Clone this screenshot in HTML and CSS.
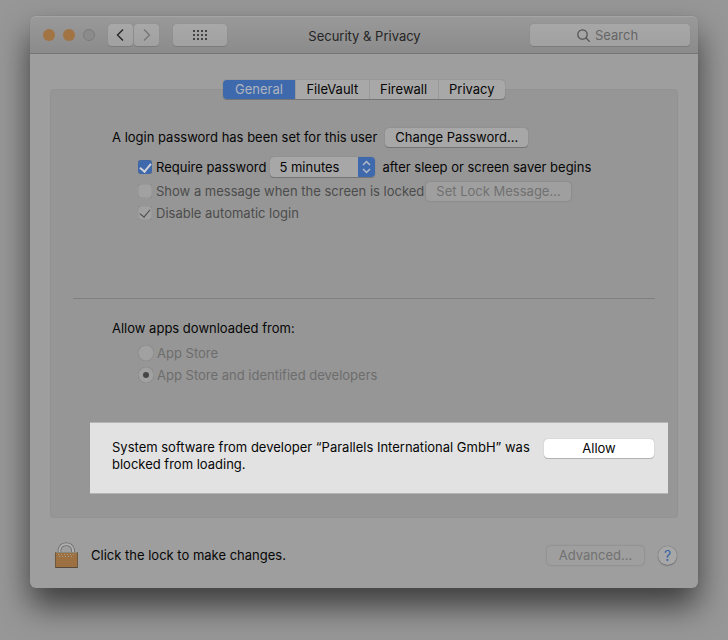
FILE: index.html
```html
<!DOCTYPE html>
<html lang="en">
<head>
<meta charset="utf-8">
<meta name="viewport" content="width=device-width, initial-scale=1">
<title>Security &amp; Privacy</title>
<link rel="stylesheet" href="styles.css">
</head>
<body>
<main class="window">
  <header class="titlebar">
    <div class="lights">
      <button class="light" aria-label="Close"></button>
      <button class="light" aria-label="Minimize"></button>
      <button class="light light-off" aria-label="Zoom" disabled></button>
    </div>
    <div class="history">
      <button class="tool" aria-label="Back"><svg width="10" height="14" viewBox="0 0 10 14"><path d="M7 1.500 1.500 7 7 12.500" fill="none" stroke="#26262a" stroke-width="1.400"/></svg></button>
      <button class="tool" aria-label="Forward"><svg width="10" height="14" viewBox="0 0 10 14"><path d="M2 1.500 7.500 7 2 12.500" fill="none" stroke="#757575" stroke-width="1.300"/></svg></button>
    </div>
    <button class="tool tool-grid" aria-label="Show All"><svg width="14" height="10" viewBox="0 0 14 10" fill="#444"><path d="M0 0h2v2H0zM4 0h2v2H4zM8 0h2v2H8zM12 0h2v2h-2zM0 4h2v2H0zM4 4h2v2H4zM8 4h2v2H8zM12 4h2v2h-2zM0 8h2v2H0zM4 8h2v2H4zM8 8h2v2H8zM12 8h2v2h-2z"/></svg></button>
    <h1 class="title">Security &amp; Privacy</h1>
    <label class="search">
      <svg width="13" height="13" viewBox="0 0 13 13" fill="none" stroke="#505050" stroke-width="1.200"><circle cx="5.500" cy="5.500" r="4.700"/><path d="m9 9 3.700 3.700"/></svg>
      <input class="search-input" type="text" placeholder="Search" aria-label="Search">
    </label>
  </header>

  <div class="content">
    <nav class="tabs">
      <button class="tab tab-active">General</button>
      <button class="tab">FileVault</button>
      <button class="tab">Firewall</button>
      <button class="tab">Privacy</button>
    </nav>

    <section class="panel">
      <div class="row login">
        <span>A login password has been set for this user</span>
        <button class="button">Change Password…</button>
      </div>
      <div class="row option require">
        <input class="check" type="checkbox" id="require" checked>
        <label class="option-label" for="require">Require password</label>
        <span class="picker">
          <select class="select" aria-label="Delay"><option>5 minutes</option></select>
          <svg class="stepper" width="17" height="20" viewBox="0 0 17 20" fill="none" stroke="#b4bac4" stroke-width="1.500"><path d="m5 8 3.500-3.500L12 8M5 12l3.500 3.500L12 12"/></svg>
        </span>
        <label for="require">after sleep or screen saver begins</label>
      </div>
      <div class="row option message">
        <input class="check" type="checkbox" id="message" disabled>
        <label class="option-label dim" for="message">Show a message when the screen is locked</label>
        <button class="button button-off" disabled>Set Lock Message…</button>
      </div>
      <div class="row option autologin">
        <input class="check" type="checkbox" id="autologin" checked disabled>
        <label class="option-label dim" for="autologin">Disable automatic login</label>
      </div>

      <hr class="divider">

      <div class="row source">Allow apps downloaded from:</div>
      <div class="row option store">
        <input class="radio" type="radio" name="source" id="store" disabled>
        <label class="option-label faint" for="store">App Store</label>
      </div>
      <div class="row option developers">
        <input class="radio" type="radio" name="source" id="developers" checked disabled>
        <label class="option-label faint" for="developers">App Store and identified developers</label>
      </div>

      <div class="notice">
        <p class="notice-text">System software from developer “Parallels International GmbH” was blocked from loading.</p>
        <button class="button button-allow">Allow</button>
      </div>
    </section>

    <footer class="footer">
      <button class="lock" aria-label="Unlock"><svg width="23" height="28" viewBox="0 0 23 28"><path d="M4.500 12V8.500a7 7 0 0 1 13.500 0V12" fill="none" stroke="#686868" stroke-width="3.500"/><path d="M4.500 12V8.500a7 7 0 0 1 13.500 0V12" fill="none" stroke="#b0b0b0" stroke-width="2"/><path d="M.5 11.500h22v15H.5z" fill="#9c7041" stroke="#6d573e"/><path d="M1 11.500h21" stroke="#8c877c"/><path d="M3 13.500h18M4 15.500h15" stroke="#aa9f8d" stroke-dasharray="1 2"/><path d="M.5 26.500h22" stroke="#57493a"/></svg></button>
      <span class="footer-text">Click the lock to make changes.</span>
      <button class="button button-off button-advanced" disabled>Advanced…</button>
      <button class="help" aria-label="Help">?</button>
    </footer>
  </div>
</main>
</body>
</html>
```
FILE: styles.css
```css
* {
  box-sizing: border-box;
}

body {
  margin: 0;
  padding: 16px 30px 53px;
  background: #979797;
  color: #060606;
  font: 13px/17px Inter, "Liberation Sans", sans-serif;
}

button,
input,
select {
  margin: 0;
  padding: 0;
  border: 0;
  color: inherit;
  font: inherit;
}

.window {
  border-radius: 6px;
  background: #9e9e9e;
  box-shadow: 0 0 1px #666, 0 18px 32px rgba(0, 0, 0, 0.6);
}

.titlebar {
  display: flex;
  align-items: center;
  height: 38px;
  padding: 0 8px 0 13px;
  border-top: 1px solid #a5a5a5;
  border-bottom: 1px solid #757575;
  border-radius: 6px 6px 0 0;
  background: linear-gradient(#999, #8b8b8b);
}

.lights {
  display: flex;
  gap: 8px;
}

.light {
  width: 12px;
  height: 12px;
  border-radius: 50%;
  background: #a27443;
}

.light-off {
  border: 1px solid #7b7b7b;
  background: #8b8b8b;
}

.history {
  display: flex;
  gap: 1px;
  margin: 0 14px 0 13px;
}

.tool {
  display: grid;
  place-items: center;
  width: 25px;
  height: 22px;
  border-radius: 4px;
  background: linear-gradient(#a8a8a8, #a1a1a1);
  box-shadow: 0 0 1px #777, 0 1px 0 #7c7c7c;
}

.tool-grid {
  width: 54px;
}

.title {
  flex: 1;
  margin: 0;
  padding: 2px 28px 0 0;
  color: #252525;
  font-size: 13px;
  font-weight: 400;
  text-align: center;
}

.search {
  display: flex;
  align-items: center;
  justify-content: center;
  gap: 5px;
  width: 160px;
  height: 22px;
  padding-right: 14px;
  padding-left: 10px;
  border-radius: 4px;
  background: linear-gradient(#a7a7a7, #a1a1a1);
  box-shadow: 0 0 1px #777, 0 1px 0 #7c7c7c;
}

.search-input {
  width: 44px;
  background: none;
}

.search-input::placeholder {
  color: #666;
  opacity: 1;
}

.content {
  padding: 26px 20px 19px;
}

.tabs {
  position: relative;
  display: flex;
  width: 282px;
  margin: 0 auto;
  border-radius: 4px;
  background: #a8a8a8;
  box-shadow: 0 0 1px #666, 0 1px 0 #777;
}

.tab {
  flex: 1 1 auto;
  height: 19px;
  border-left: 1px solid #999;
  background: none;
}

.tab-active {
  flex: none;
  width: 72px;
  border: 0;
  border-radius: 4px 0 0 4px;
  background: #3e69ad;
  color: #b0b5be;
}

.panel {
  margin-top: -10px;
  padding: 37px 9px 23px 39px;
  border: 1px solid #929292;
  border-radius: 4px;
  background: #969696;
}

.row {
  display: flex;
  align-items: center;
  height: 20px;
  margin: 0 0 2px 22px;
  white-space: nowrap;
}

.login {
  gap: 8px;
  margin-bottom: 10px;
}

.option {
  margin-left: 48px;
}

.option-label {
  margin-left: 4px;
}

.require {
  margin-bottom: 4px;
}

.dim {
  color: #4c4c4c;
}

.faint {
  margin-left: 3px;
  color: #6d6d6d;
}

.check,
.radio {
  display: grid;
  place-items: center;
  flex: none;
  width: 14px;
  height: 14px;
  border-radius: 3px;
  background: #a1a1a1;
  box-shadow: inset 0 0 1px #606060;
  appearance: none;
}

.check:checked:enabled {
  background: #3e69ad;
  color: #d0d3d8;
}

.check:checked::before {
  width: 5px;
  height: 9px;
  margin-top: -2px;
  border: solid currentColor;
  border-width: 0 2px 2px 0;
  content: "";
  transform: rotate(40deg);
}

.check:checked:disabled {
  color: #484848;
}

.check:checked:disabled::before {
  border-width: 0 1px 1px 0;
}

.radio {
  width: 16px;
  height: 16px;
  border-radius: 50%;
}

.radio:checked::before {
  width: 6px;
  height: 6px;
  border-radius: 50%;
  background: #464646;
  content: "";
}

.button {
  flex: none;
  height: 19px;
  padding: 0 10px;
  border-radius: 4px;
  background: #a7a7a7;
  box-shadow: 0 0 1px #666, 0 1px 0 #777;
}

.button-off {
  background: #9f9f9f;
  box-shadow: 0 0 2px #777;
  color: #717171;
}

.message .button {
  margin-left: 2px;
}

.button-advanced {
  width: 97px;
}

.picker {
  display: flex;
  margin: 0 7px 0 4px;
  border-radius: 4px;
  background: #a7a7a7;
  box-shadow: 0 0 1px #666, 0 1px 0 #777;
}

.select {
  width: 88px;
  height: 20px;
  padding-left: 9px;
  background: none;
  appearance: none;
}

.stepper {
  border-radius: 0 4px 4px 0;
  background: #3e69ad;
}

.divider {
  height: 1px;
  margin: 75px 13px 19px -17px;
  border: 0;
  background: #808080;
}

.source {
  margin-bottom: 5px;
}

.notice {
  display: flex;
  align-items: flex-start;
  justify-content: space-between;
  gap: 12px;
  margin-top: 37px;
  padding: 16px 14px 20px 22px;
  border: solid #b5b5b5;
  border-width: 1px 0;
  background: #e2e2e2;
}

.notice-text {
  flex: 1;
  margin: 0;
}

.button-allow {
  width: 110px;
  background: #fff;
  box-shadow: 0 0 1px #999, 0 1px 0 #b5b5b5;
}

.footer {
  display: flex;
  align-items: center;
  margin-top: 23px;
  padding: 0 1px 0 5px;
}

.lock {
  display: flex;
  background: none;
}

.footer-text {
  flex: 1;
  margin-left: 13px;
}

.help {
  width: 19px;
  height: 19px;
  margin-left: 14px;
  border-radius: 50%;
  background: #a7a7a7;
  box-shadow: 0 0 1px #555, 0 1px 1px #777;
  color: #3762a7;
  font-size: 14px;
}
```
